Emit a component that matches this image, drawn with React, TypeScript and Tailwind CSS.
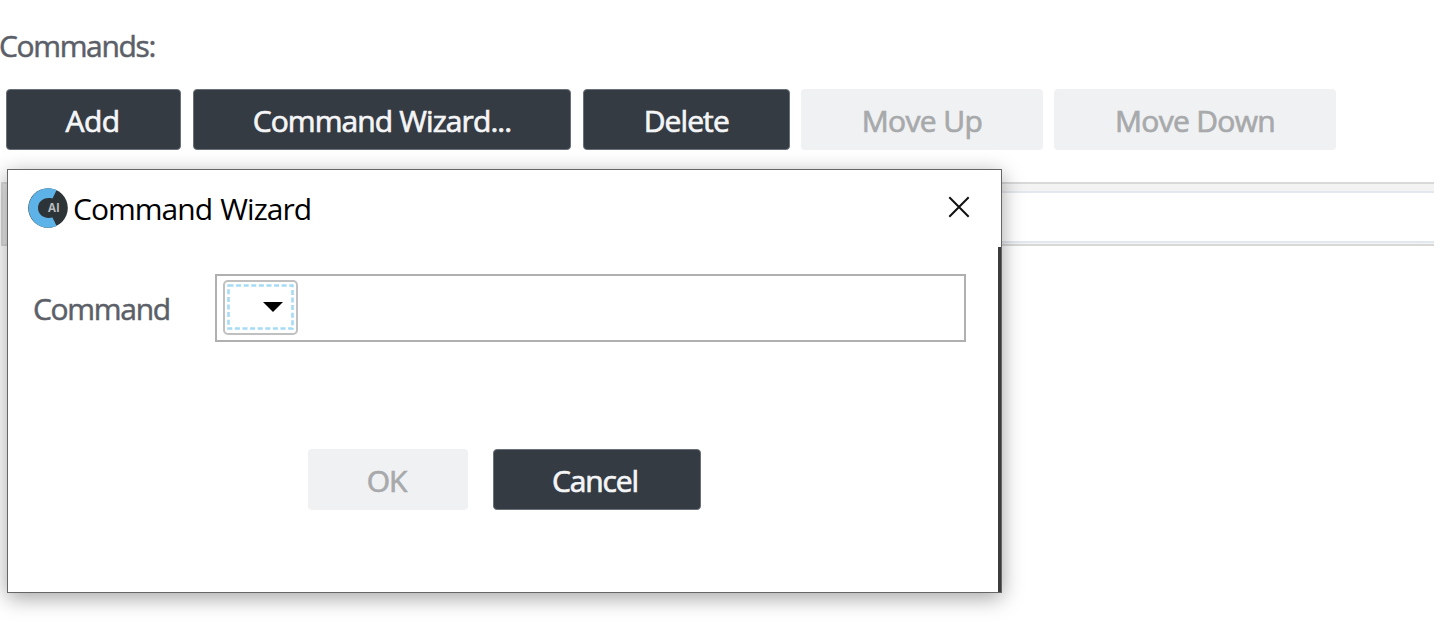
import clsx from 'clsx'

type ButtonProps = {
  label: string
  className: string
  disabled?: boolean
}

function Button({ label, className, disabled }: ButtonProps) {
  return (
    <button
      disabled={disabled}
      className={clsx(
        'h-[60.5px] shrink-0 rounded-[4px] text-[30px] leading-none [-webkit-text-stroke:0.7px_currentColor] flex items-center justify-center whitespace-nowrap',
        disabled ? 'bg-[#f0f1f3] text-[#a7a9ab]' : 'bg-[#343b43] text-[#f4f5f6] border border-[#6a7077]',
        className
      )}
    >
      <span className="pt-1">{label}</span>
    </button>
  )
}

function Logo() {
  return (
    <svg className="w-10 h-10 shrink-0" viewBox="0 0 40 40">
      <circle cx="20" cy="20" r="19.8" fill="#2c3437" />
      <path
        d="M28.6 2 A19.8 19.8 0 1 0 28.6 38 L24.5 29.4 C16 31.5 10 26.5 10 20 C10 13.5 16 8.5 24.5 10.6 Z"
        fill="#5db3e8"
      />
      <text x="20" y="24" fontFamily="Open Sans, sans-serif" fontWeight="700" fontSize="11.5" fill="#b9bdbf">
        AI
      </text>
    </svg>
  )
}

function CommandDialog() {
  return (
    <div className="absolute left-[7px] top-[169px] w-[995px] h-[424px] bg-white border border-[#666] shadow-[0_5px_20px_rgba(0,0,0,0.36)] flex flex-col">
      {/* Title bar */}
      <div className="h-[77px] shrink-0 flex items-center pl-5 pr-[31px] pb-[2px]">
        <Logo />
        <h2 className="ml-[5px] pt-[2px] text-[30px] leading-none text-black tracking-[-0.98px] [word-spacing:1.5px] whitespace-nowrap">
          Command Wizard
        </h2>
        <button className="ml-auto pb-[2px]" aria-label="Close">
          <svg className="w-[22px] h-[22px] block" viewBox="0 0 22 22" fill="none" stroke="#111" strokeWidth="2">
            <path d="M1.3 1.3 L20.7 20.7 M20.7 1.3 L1.3 20.7" />
          </svg>
        </button>
      </div>

      {/* Body */}
      <div className="flex-1 border-r-3 border-[#3c3c3c] flex flex-col pt-[27px]">
        <div className="flex items-center pl-[25px]">
          <label className="w-[182px] pt-[2px] text-[30px] leading-none [-webkit-text-stroke:0.5px_currentColor] text-[#5b6068] tracking-[-1.3px]">
            Command
          </label>
          <div className="w-[751px] h-[68px] border-2 border-[#b0b0b0] flex items-center pl-[6px]">
            <button className="w-[75px] h-[55px] -mt-[2px] rounded-[5px] border-2 border-[#c0c0c0] flex items-center justify-center">
              <svg className="w-[67px] h-[47px]" viewBox="0 0 67 47">
                <rect x="1.5" y="1.5" width="64" height="43" fill="none" stroke="#a6dbf6" strokeWidth="2.6" strokeDasharray="5 2.6" />
                <path d="M36 18 H56 L46 28 Z" fill="#000" />
              </svg>
            </button>
          </div>
        </div>
        <div className="flex mt-[107px] pl-[300px] gap-[25px]">
          <Button label="OK" className="w-[160px] tracking-[-1px] pr-[3px]" disabled />
          <Button label="Cancel" className="w-[208px] tracking-[-1.1px] pr-[4px]" />
        </div>
      </div>
    </div>
  )
}

export default function App() {
  return (
    <div className="relative w-[1447px] h-[625px] overflow-hidden bg-white font-['Open_Sans','Noto_Sans',sans-serif]">
      <div className="pt-[31px] -ml-px h-[89px] text-[30px] leading-none [-webkit-text-stroke:0.5px_currentColor] text-[#5b6068] tracking-[-1.35px]">
        Commands:
      </div>

      <div className="flex pl-[6px] gap-3">
        <Button label="Add" className="w-[175px] tracking-[-0.5px] pr-[2px]" />
        <Button label="Command Wizard..." className="w-[378px] tracking-[-0.9px]" />
        <Button label="Delete" className="w-[206.5px] tracking-[-0.9px]" />
        <Button label="Move Up" className="w-[242px] tracking-[-0.6px] -ml-[0.5px]" disabled />
        <Button label="Move Down" className="w-[282px] tracking-[-0.7px] -ml-px" disabled />
      </div>

      {/* Command list */}
      <div className="mt-8 ml-px w-[1432.5px] h-[64px] bg-[#f3f3f3] border-y-2 border-l-2 border-[#d8d8d8] flex">
        <div className="w-12 bg-[#e6e6e6]" />
        <div className="flex-1 mt-[7px] mb-px bg-white border-y-2 border-[#e3e8ee]" />
      </div>

      <CommandDialog />
    </div>
  )
}
